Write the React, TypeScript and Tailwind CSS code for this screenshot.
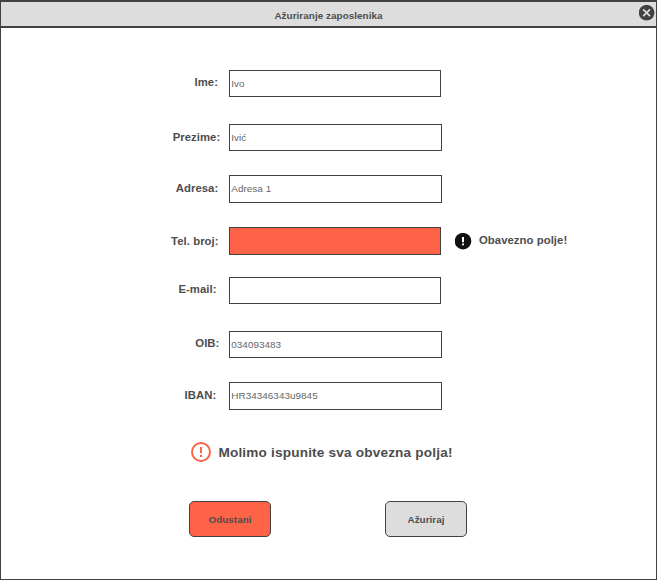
type Field = {
  label: string;
  value: string;
  row: string;
  labelPos: string;
  box: string;
  valuePos: string;
  error?: string;
};

const fields: Field[] = [
  { label: "Ime:", value: "Ivo", row: "h-[27px]", labelPos: "w-[217px] pb-[3px]", box: "ml-[11px] w-[212px]", valuePos: "pt-px" },
  { label: "Prezime:", value: "Ivić", row: "mt-[27px] h-[27px]", labelPos: "w-[219.3px] pb-px", box: "ml-[8.7px] w-[213px]", valuePos: "pt-px" },
  { label: "Adresa:", value: "Adresa 1", row: "mt-[24px] h-[28px]", labelPos: "w-[217.3px] pb-[2px]", box: "ml-[10.7px] w-[213px]", valuePos: "" },
  { label: "Tel. broj:", value: "", row: "mt-[24px] h-[28px]", labelPos: "w-[217.6px]", box: "ml-[10.4px] w-[212px] bg-[#ff6347]", valuePos: "", error: "Obavezno polje!" },
  { label: "E-mail:", value: "", row: "mt-[22px] h-[27px]", labelPos: "w-[215.5px] pb-[3px]", box: "ml-[12.5px] w-[212px]", valuePos: "" },
  { label: "OIB:", value: "034093483", row: "mt-[27px] h-[27px]", labelPos: "w-[218.4px] pb-[3px]", box: "ml-[9.6px] w-[213px]", valuePos: "pt-px" },
  { label: "IBAN:", value: "HR34346343u9845", row: "mt-[24px] h-[28px]", labelPos: "w-[215.3px] pb-[2px]", box: "ml-[12.7px] w-[213px]", valuePos: "" },
];

function CloseIcon() {
  return (
    <svg className="size-4" viewBox="0 0 16 16" fill="none">
      <circle cx="7.6" cy="7.7" r="7.8" fill="#424242" />
      <path d="M4.2 4.3l6.8 6.8M11 4.3l-6.8 6.8" stroke="#dddddd" strokeWidth="1.7" />
    </svg>
  );
}

function RequiredIcon() {
  return (
    <svg className="ml-[14px] size-[17px] shrink-0" viewBox="0 0 17 17">
      <circle cx="8" cy="8.2" r="8.3" fill="#111111" />
      <path d="M7 4h2v5.3H7z" fill="#fff" />
      <rect x="7" y="10.5" width="2" height="1.8" fill="#fff" />
    </svg>
  );
}

function WarningIcon() {
  return (
    <svg className="size-5 shrink-0" viewBox="0 0 20 20" fill="none">
      <circle cx="10" cy="10" r="9" stroke="#ff6347" strokeWidth="2" />
      <path d="M9 5h2v6H9zM9 13h2v2H9z" fill="#ff6347" />
    </svg>
  );
}

function FormRow({ field }: { field: Field }) {
  return (
    <div className={`flex items-center ${field.row}`}>
      <label className={`shrink-0 text-right text-[11.33px] leading-[14px] font-bold tracking-[0.05px] ${field.labelPos}`}>
        {field.label}
      </label>
      <div className={`flex h-full shrink-0 items-center border border-[#424242] pl-[1.3px] text-[9.9px] leading-3 tracking-[0.05px] text-[#666] ${field.box}`}>
        <span className={field.valuePos}>{field.value}</span>
      </div>
      {field.error && (
        <>
          <RequiredIcon />
          <span className="ml-[7px] pb-[2px] text-[11.33px] leading-[14px] font-bold tracking-[0.05px]">{field.error}</span>
        </>
      )}
    </div>
  );
}

export default function App() {
  return (
    <main className="flex h-[580px] w-[657px] flex-col border border-t-2 border-[#424242] bg-white font-['Liberation_Sans',Arial,sans-serif] text-[#4d4d4d]">
      <header className="grid h-[26px] shrink-0 grid-cols-[1fr_auto_1fr] items-center border-b-2 border-[#424242] bg-[#dddddd]">
        <span />
        <h1 className="pt-[4px] text-[9.9px] leading-3 font-bold tracking-[0.05px]">Ažuriranje zaposlenika</h1>
        <button className="mr-px mb-[3px] justify-self-end" aria-label="Zatvori">
          <CloseIcon />
        </button>
      </header>
      <form className="flex flex-col pt-[42px]">
        {fields.map((field) => (
          <FormRow key={field.label} field={field} />
        ))}
        <div className="mt-8 ml-[190px] flex h-5 items-center">
          <WarningIcon />
          <p className="ml-[7.4px] pt-[2px] text-[13.6px] leading-5 font-bold tracking-[0.18px] whitespace-nowrap">
            Molimo ispunite sva obvezna polja!
          </p>
        </div>
        <div className="mt-[39px] ml-[188px] flex gap-[114px]">
          <button type="button" className="h-9 w-[82px] rounded-[5px] border border-[#424242] bg-[#ff6347] pt-[2px] text-[9.9px] leading-3 font-bold tracking-[0.03px]">
            Odustani
          </button>
          <button type="button" className="h-9 w-[82px] rounded-[5px] border border-[#424242] bg-[#dddddd] pt-[2px] text-[9.9px] leading-3 font-bold tracking-[0.03px]">
            Ažuriraj
          </button>
        </div>
      </form>
    </main>
  );
}
